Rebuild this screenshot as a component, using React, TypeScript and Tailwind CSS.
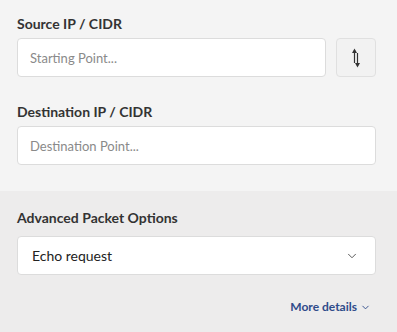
import { ChevronDown } from "lucide-react"

const font = { fontFamily: '"Source Sans Pro", Lato, "Liberation Sans", sans-serif' }

const SwapIcon = () => (
  <svg width="10" height="22" viewBox="0 0 10 22" fill="none">
    <path d="M3.5 3v13" stroke="#333" strokeWidth="1.2" />
    <path d="M1 6L3.5 1.5 6 6z" fill="#333" />
    <path d="M6.5 6v13" stroke="#333" strokeWidth="1.2" />
    <path d="M4 16l2.5 4.5L9 16z" fill="#333" />
  </svg>
)

const App = () => {
  return (
    <div className="w-[397px] h-[332px] overflow-hidden bg-[#f4f4f4]" style={font}>
      <div className="pl-[17px] pr-[21px] pt-[14px] pb-[26px]">
        <label className="block text-[14px] font-bold text-[#333] leading-[20px]">
          Source IP / CIDR
        </label>
        <div className="flex gap-[10px] mt-[4px]">
          <input
            placeholder="Starting Point..."
            className="flex-1 h-[39px] rounded-[4px] border border-[#dcdcdc] bg-white px-[12px] text-[13px] text-[#333] placeholder:text-[#8a8a8a] outline-none"
          />
          <button className="w-[40px] h-[39px] rounded-[4px] border border-[#e0e0e0] bg-[#f2f2f2] flex items-center justify-center">
            <SwapIcon />
          </button>
        </div>

        <label className="block text-[14px] font-bold text-[#333] leading-[20px] mt-[25px]">
          Destination IP / CIDR
        </label>
        <input
          placeholder="Destination Point..."
          className="w-full mt-[4px] h-[39px] rounded-[4px] border border-[#dcdcdc] bg-white px-[12px] text-[13px] text-[#333] placeholder:text-[#8a8a8a] outline-none"
        />
      </div>

      <div className="bg-[#edecec] pl-[17px] pr-[21px] pt-[17px] pb-[20px] h-[142px]">
        <label className="block text-[14px] font-bold text-[#333] leading-[20px]">
          Advanced Packet Options
        </label>
        <div className="mt-[8px] h-[39px] rounded-[4px] border border-[#dcdcdc] bg-white flex items-center justify-between pl-[14px] pr-[16px]">
          <span className="text-[14px] text-[#222]">Echo request</span>
          <ChevronDown size={14} strokeWidth={1.5} className="text-[#444]" />
        </div>
        <div className="flex justify-end mt-[23px] pr-[5px]">
          <button className="flex items-center gap-[3px] text-[12px] font-bold text-[#2f4b8a]">
            More details
            <ChevronDown size={11} strokeWidth={2} />
          </button>
        </div>
      </div>
    </div>
  )
}

export default App
